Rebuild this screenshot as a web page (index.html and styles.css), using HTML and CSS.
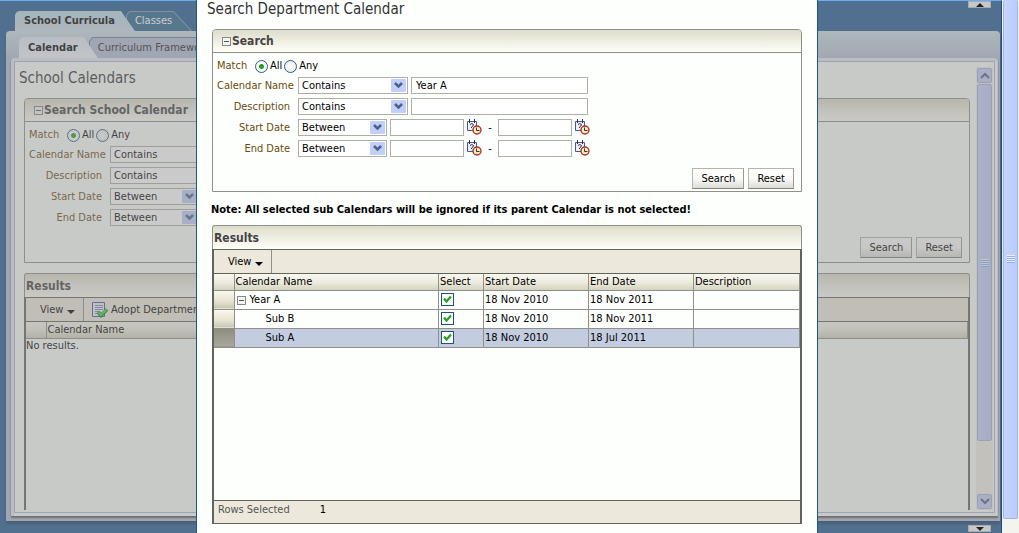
FILE: index.html
```html
<!DOCTYPE html>
<html lang="en">
<head>
    <meta charset="UTF-8">
    <title>School Calendars</title>
    <meta name="viewport" content="width=device-width, initial-scale=1.0">
    <link rel="stylesheet" href="styles.css">
</head>
<body>
    <!-- shared icons -->
    <svg class="sprite" aria-hidden="true">
        <symbol id="icon-calendar" viewBox="0 0 16 16">
            <path d="M1.5 2.5h9v9h-9z" fill="#e8eefb" stroke="#4a549c"/>
            <path d="M3.5 0v4M8.5 0v4" stroke="#333" />
            <path d="M4 5.500q2-2 3.500 0q0 1.500-2 2.500v1" fill="none" stroke="#333"/>
            <circle cx="11" cy="11" r="4" fill="#ffe9bc" stroke="#a8342c" stroke-width="1.400"/>
            <path d="M10.500 8.500v3h3" fill="none" stroke="#333"/>
        </symbol>
        <symbol id="icon-adopt" viewBox="0 0 16 16">
            <path d="M.5 .5h12v14h-12z" fill="#e8ecfa" stroke="#4a549c"/>
            <path d="M3 3.500h8M3 5.500h8M3 7.500h8M3 9.500h4M3 11.500h3" stroke="#8088b8"/>
            <path d="M6 10l3 3.500l6-6" fill="none" stroke="#0a7a14" stroke-width="3.500"/>
            <path d="M6 10l3 3l5.500-5.500" fill="none" stroke="#3cdc3c" stroke-width="2"/>
        </symbol>
    </svg>

    <div class="page">
        <nav class="tabs">
            <a href="#" class="tab selected">School Curricula</a>
            <a href="#" class="tab">Classes</a>
        </nav>
        <div class="frame">
            <nav class="tabs subtabs">
                <a href="#" class="tab selected">Calendar</a>
                <a href="#" class="tab">Curriculum Framework</a>
            </nav>
            <div class="body">
                <div class="content">
                    <h1>School Calendars</h1>

                    <section class="panel">
                        <h2 class="panel-header"><button class="toggle" aria-label="Collapse"></button>Search School Calendar</h2>
                        <form class="search">
                            <div class="match">
                                <span class="label">Match</span>
                                <label><input type="radio" name="m1" checked>All</label>
                                <label><input type="radio" name="m1">Any</label>
                            </div>
                            <div class="row">
                                <label for="b-name">Calendar Name</label>
                                <select id="b-name" class="wide"><option>Contains</option></select>
                            </div>
                            <div class="row">
                                <label for="b-desc">Description</label>
                                <select id="b-desc" class="wide"><option>Contains</option></select>
                            </div>
                            <div class="row">
                                <label for="b-start">Start Date</label>
                                <select id="b-start"><option>Between</option></select>
                            </div>
                            <div class="row">
                                <label for="b-end">End Date</label>
                                <select id="b-end"><option>Between</option></select>
                            </div>
                            <div class="buttons">
                                <button type="button">Search</button>
                                <button type="button">Reset</button>
                            </div>
                        </form>
                    </section>

                    <section class="results">
                        <h2 class="panel-header">Results</h2>
                        <div class="grid">
                            <div class="toolbar">
                                <button class="view">View <span class="caret"></span></button>
                                <button class="adopt"><svg width="16" height="16"><use href="#icon-adopt"/></svg>Adopt Department Calendar</button>
                            </div>
                            <table>
                                <thead>
                                    <tr><th class="handle"></th><th>Calendar Name</th></tr>
                                </thead>
                            </table>
                            <p class="empty">No results.</p>
                        </div>
                    </section>
                </div>
                <div class="scrollbar">
                    <div class="arrow"><svg width="10" height="7"><path d="M1 6l4-4l4 4" /></svg></div>
                    <div class="thumb"><i class="grip"></i></div>
                    <div class="track"></div>
                    <div class="arrow"><svg width="10" height="7"><path d="M1 1l4 4l4-4" /></svg></div>
                </div>
            </div>
        </div>
        <div class="glass"></div>
        <button class="splitter top" aria-label="Collapse header"><svg width="8" height="4"><path d="M0 4l4-4l4 4z"/></svg></button>
        <button class="splitter bottom" aria-label="Collapse footer"><svg width="8" height="4"><path d="M0 0l4 4l4-4z"/></svg></button>
    </div>

    <div class="window-scrollbar">
        <div class="thumb"><i class="grip"></i></div>
    </div>

    <div class="dialog" role="dialog" aria-label="Search Department Calendar">
        <h1>Search Department Calendar</h1>

        <section class="panel">
            <h2 class="panel-header"><button class="toggle" aria-label="Collapse"></button>Search</h2>
            <form class="search">
                <div class="match">
                    <span class="label">Match</span>
                    <label><input type="radio" name="m2" checked>All</label>
                    <label><input type="radio" name="m2">Any</label>
                </div>
                <div class="row">
                    <label for="d-name">Calendar Name</label>
                    <select id="d-name" class="wide"><option>Contains</option></select>
                    <input type="text" value="Year A" aria-label="Calendar name value">
                </div>
                <div class="row">
                    <label for="d-desc">Description</label>
                    <select id="d-desc" class="wide"><option>Contains</option></select>
                    <input type="text" aria-label="Description value">
                </div>
                <div class="row">
                    <label for="d-start">Start Date</label>
                    <select id="d-start"><option>Between</option></select>
                    <input type="text" class="date" aria-label="Start date from">
                    <button type="button" class="pick" aria-label="Pick date"><svg width="16" height="16"><use href="#icon-calendar"/></svg></button>
                    <span class="dash">-</span>
                    <input type="text" class="date" aria-label="Start date to">
                    <button type="button" class="pick" aria-label="Pick date"><svg width="16" height="16"><use href="#icon-calendar"/></svg></button>
                </div>
                <div class="row">
                    <label for="d-end">End Date</label>
                    <select id="d-end"><option>Between</option></select>
                    <input type="text" class="date" aria-label="End date from">
                    <button type="button" class="pick" aria-label="Pick date"><svg width="16" height="16"><use href="#icon-calendar"/></svg></button>
                    <span class="dash">-</span>
                    <input type="text" class="date" aria-label="End date to">
                    <button type="button" class="pick" aria-label="Pick date"><svg width="16" height="16"><use href="#icon-calendar"/></svg></button>
                </div>
                <div class="buttons">
                    <button type="button">Search</button>
                    <button type="button">Reset</button>
                </div>
            </form>
        </section>

        <p class="note">Note: All selected sub Calendars will be ignored if its parent Calendar is not selected!</p>

        <section class="results">
            <h2 class="panel-header">Results</h2>
            <div class="grid">
                <div class="toolbar">
                    <button class="view">View <span class="caret"></span></button>
                </div>
                <table>
                    <thead>
                        <tr>
                            <th class="handle"></th>
                            <th>Calendar Name</th>
                            <th class="select">Select</th>
                            <th class="day">Start Date</th>
                            <th class="day">End Date</th>
                            <th class="desc">Description</th>
                        </tr>
                    </thead>
                    <tbody>
                        <tr>
                            <td class="handle"></td>
                            <td><button class="toggle" aria-label="Collapse"></button>Year A</td>
                            <td><input type="checkbox" checked aria-label="Select Year A"></td>
                            <td>18 Nov 2010</td>
                            <td>18 Nov 2011</td>
                            <td></td>
                        </tr>
                        <tr>
                            <td class="handle"></td>
                            <td class="child">Sub B</td>
                            <td><input type="checkbox" checked aria-label="Select Sub B"></td>
                            <td>18 Nov 2010</td>
                            <td>18 Nov 2011</td>
                            <td></td>
                        </tr>
                        <tr class="current">
                            <td class="handle"></td>
                            <td class="child">Sub A</td>
                            <td><input type="checkbox" checked aria-label="Select Sub A"></td>
                            <td>18 Nov 2010</td>
                            <td>18 Jul 2011</td>
                            <td></td>
                        </tr>
                    </tbody>
                </table>
                <div class="status"><span>Rows Selected</span><span class="count">1</span></div>
            </div>
        </section>
    </div>
</body>
</html>
```

FILE: styles.css
```css
* { box-sizing: border-box; }
body {
    margin: 0;
    height: 100vh;
    display: flex;
    position: relative;
    overflow: hidden;
    font: 11px/14px Tahoma, "DejaVu Sans Condensed", "DejaVu Sans", sans-serif;
    color: #000;
}
h1, h2, p { margin: 0; }
button, input, select { font: inherit; color: inherit; margin: 0; }
svg { display: block; }
.sprite { position: absolute; width: 0; height: 0; }
h1 { font-size: 15px; line-height: 18px; font-weight: normal; color: #333; }

/* page behind the dialog */
.page {
    flex: 1;
    min-width: 0;
    display: flex;
    flex-direction: column;
    position: relative;
    padding: 10px 1px 12px 6px;
    background: #215a92;
    border-top: 1px solid #6cacf0;
    border-right: 1px solid #1b4f80;
}
.tabs { display: flex; height: 20px; padding-left: 9px; }
.tab {
    padding: 0 20px 0 9px;
    line-height: 20px;
    color: #fff;
    text-decoration: none;
    white-space: nowrap;
    margin-left: -9px;
    background: url("data:image/svg+xml,%3Csvg xmlns='http://www.w3.org/2000/svg' viewBox='0 0 64 20' preserveAspectRatio='none'%3E%3Cpath d='M.5 20V4L3.5 .5H46L63.500 20' fill='%232c6791' stroke='%237c94ac'/%3E%3C/svg%3E") 0 0 / 100% 100%;
}
.tab.selected {
    position: relative;
    z-index: 1;
    margin-left: 0;
    font-weight: bold;
    color: #000;
    border-radius: 5px 0 0 0;
    background: linear-gradient(#bcd8e6, #c9dbe6);
    clip-path: polygon(0 0, calc(100% - 14px) 0, 100% 100%, 0 100%);
}
.frame {
    flex: 1;
    display: flex;
    flex-direction: column;
    padding: 6px 2px 5px 5px;
    border-radius: 4px 4px 0 0;
    background: linear-gradient(#cbdde6, #b4bed2 28px, #b4bed2);
    box-shadow: 0 3px 3px #103a66;
}
.subtabs { height: 21px; padding-left: 8px; }
.subtabs .tab {
    line-height: 21px;
    color: #222;
    background-image: url("data:image/svg+xml,%3Csvg xmlns='http://www.w3.org/2000/svg' viewBox='0 0 140 20' preserveAspectRatio='none'%3E%3Cpath d='M.5 20V4L3.500 .5H126L139.500 20' fill='%23b2bcd6' stroke='%23707c96'/%3E%3C/svg%3E");
}
.subtabs .selected { background: linear-gradient(#dfe8f4, #f0f4fa); color: #000; }
.body {
    flex: 1;
    display: flex;
    padding: 6px 4px 6px 10px;
    border: 3px solid #e4e8f2;
    border-bottom-width: 0;
    border-right-width: 1px;
    border-radius: 4px 4px 0 0;
    background: #fcfffc;
    outline: 1px solid #a9b8d8;
    outline-offset: -4px;
    box-shadow: 0 2px 2px #555;
}
.content { flex: 1; display: flex; flex-direction: column; }
.content h1 { padding-top: 2px; margin: 0 0 11px -5px; color: #333; }
.content .search { padding-bottom: 4px; }
.content .results { margin-top: 10px; }
.content .grid { border-bottom: 0; }
.glass { position: absolute; inset: 0; z-index: 2; background: rgba(139, 139, 139, .46); }
.splitter {
    position: absolute;
    z-index: 3;
    right: 10px;
    width: 23px;
    height: 7px;
    padding: 0;
    display: flex;
    align-items: center;
    justify-content: center;
    border: 1px solid #aaa;
    background: #c8c8c8;
    fill: #222;
}
.splitter.top { top: 0; }
.splitter.bottom { bottom: 1px; }

/* panels */
.panel { border: 1px solid #90908a; border-radius: 4px 4px 0 0; }
.panel-header {
    height: 23px;
    display: flex;
    align-items: center;
    padding-left: 9px;
    border-radius: 3px 3px 0 0;
    border-bottom: 1px solid #90908a;
    background: linear-gradient(#dcdccb, #efeee2 50%, #fffef8);
    font-size: 12px;
    line-height: 20px;
    color: #444;
}
.results { flex: 1; display: flex; flex-direction: column; }
.results .panel-header {
    height: 24px;
    padding-left: 1px;
    border: 1px solid #90908a;
    border-bottom: 0;
}
.toggle {
    width: 9px;
    height: 9px;
    padding: 0;
    margin-right: 1px;
    border: 1px solid #888;
    background: linear-gradient(#555, #555) center / 5px 1px no-repeat #f4f4f0;
}

/* search form */
.search { padding: 6px 7px 2px 4px; display: flex; flex-direction: column; gap: 4px; }
.match { display: flex; align-items: center; height: 14px; }
.match label { display: flex; align-items: center; gap: 2px; margin-right: 2px; }
.match .label { width: 38px; }
.label, .row > label { color: #6b4a10; }
.row { display: flex; align-items: center; height: 17px; }
.row > label { width: 73px; margin-right: 8px; text-align: right; white-space: nowrap; }
input[type=radio] {
    appearance: none;
    width: 13px;
    height: 13px;
    border: 1px solid #2e5c8c;
    border-radius: 50%;
    background: radial-gradient(#fff, #e4e4de);
}
input[type=radio]:checked { background: radial-gradient(circle, #22a022 2px, #fff 3px, #eee); }
select {
    appearance: none;
    width: 89px;
    height: 17px;
    padding: 0 3px;
    margin-right: 3px;
    border: 1px solid #aeb0a8;
    border-radius: 0;
    line-height: 15px;
    background: url("data:image/svg+xml,%3Csvg xmlns='http://www.w3.org/2000/svg' width='15' height='13'%3E%3Crect width='15' height='13' rx='1' fill='%23c0d0fa'/%3E%3Cpath d='M4 4l3.500 3.500l3.500-3.500' fill='none' stroke='%234d6185' stroke-width='2.500'/%3E%3C/svg%3E") right 1px center no-repeat #fff;
}
select.wide { width: 110px; }
input[type=text] {
    width: 177px;
    height: 17px;
    padding: 0 4px;
    border: 1px solid #aeb0a8;
    background: #fff;
}
input[type=text].date { width: 74px; }
.pick { margin-left: 2px; padding: 0 0 2px; border: 0; background: none; }
.dash { width: 16px; text-align: center; }
.buttons { display: flex; justify-content: flex-end; gap: 4px; margin-top: 7px; }
.buttons button {
    height: 21px;
    padding: 0 8px;
    border: 1px solid #b4b6ae;
    border-bottom-color: #80827a;
    border-right-color: #9a9c94;
    background: linear-gradient(#fff, #fafaf8 50%, #dcdcd6);
}

/* results grid */
.grid {
    flex: 1;
    display: flex;
    flex-direction: column;
    border: 1px solid #62645c;
    border-left-width: 2px;
    border-right-width: 2px;
}
.toolbar { display: flex; height: 24px; border-bottom: 1px solid #62645c; background: #ece9dc; }
.toolbar button { display: flex; align-items: center; border: 0; background: none; white-space: nowrap; }
.toolbar .view { width: 58px; padding: 0 0 0 14px; gap: 4px; border-right: 1px solid #90908a; }
.toolbar .adopt { gap: 3px; padding: 0 8px; }
.caret { border: 4px solid transparent; border-top-color: #000; border-bottom: 0; margin-top: 4px; }
table { width: 100%; border-collapse: collapse; table-layout: fixed; }
th, td {
    height: 19px;
    padding: 0 0 0 1px;
    border: 1px solid #90908a;
    border-width: 0 1px 1px 0;
    font-weight: normal;
    text-align: left;
    white-space: nowrap;
}
th { height: 16px; line-height: 14px; background: linear-gradient(#f8f7ee, #eeecdf 50%, #d4d2bf); }
.handle { width: 20px; }
td.handle { background: linear-gradient(#fbf9ee, #e6e3d2 60%, #c6c4b2); }
.select { width: 45px; }
.day { width: 105px; }
.desc { width: 106px; }
td .toggle { margin: 0 4px 0 1px; vertical-align: -1px; }
td.child { padding-left: 31px; }
.current td { background: #c4cde0; }
.current td.handle { background: linear-gradient(#8c8c80, #a8a89a); }
input[type=checkbox] {
    appearance: none;
    display: block;
    width: 13px;
    height: 13px;
    margin-left: 1px;
    border: 1px solid #1c5180;
    background: url("data:image/svg+xml,%3Csvg xmlns='http://www.w3.org/2000/svg' width='11' height='11'%3E%3Cpath d='M2 4.500l2.500 3l4.500-5' fill='none' stroke='%2321a121' stroke-width='2.200'/%3E%3C/svg%3E") #fff;
}
.status {
    display: flex;
    height: 23px;
    margin-top: auto;
    padding: 2px 4px;
    border-top: 1px solid #62645c;
    background: #ece9dc;
    color: #555;
}
.count { margin-left: 30px; color: #000; }

/* dialog */
.dialog {
    position: absolute;
    z-index: 4;
    top: 0;
    bottom: 0;
    left: 196px;
    right: 201px;
    display: flex;
    flex-direction: column;
    padding: 0 15px 9px;
    border: 1px solid #165a8c;
    border-width: 0 1px;
    background: #fcfffc;
}
.dialog h1 { margin: 0 0 11px -5px; }
.note { margin: 11px 0 8px -1px; font-weight: bold; }

/* scrollbars */
.scrollbar { width: 17px; margin-left: 6px; display: flex; flex-direction: column; gap: 1px; padding: 1px; background: #f0efe6; }
.arrow {
    height: 15px;
    display: flex;
    align-items: center;
    justify-content: center;
    border: 1px solid #a4b4e0;
    border-radius: 2px;
    background: #c2cff5;
    fill: none;
    stroke: #4d6185;
    stroke-width: 2;
}
.thumb {
    display: flex;
    align-items: center;
    justify-content: center;
    border: 1px solid #a4b4e0;
    border-radius: 2px;
    background: linear-gradient(90deg, #c8d4fa, #bccaf5);
}
.scrollbar .thumb { flex: 7; }
.track { flex: 1; }
.grip { width: 8px; height: 8px; background: repeating-linear-gradient(#eef4fe 0 1px, #8cb0f8 1px 2px); }
.window-scrollbar { width: 17px; display: flex; flex-direction: column; padding: 0 1px 14px; background: #f4f3ee; }
.window-scrollbar .thumb { flex: 1; border-top: 0; background: linear-gradient(90deg, #c6d4fe, #b8cdff); }
```
